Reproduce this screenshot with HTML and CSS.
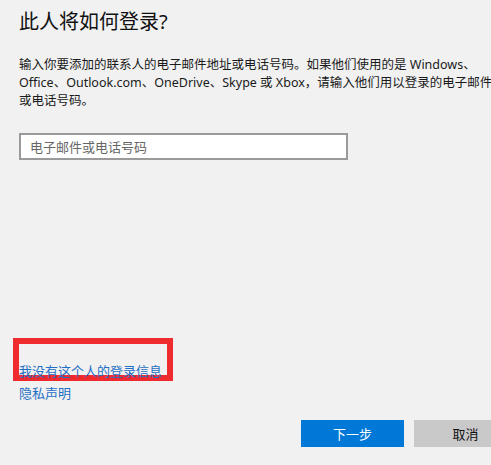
FILE: index.html
```html
<!DOCTYPE html>
<html lang="zh-CN">
<head>
<meta charset="UTF-8">
<meta name="viewport" content="width=device-width, initial-scale=1.0">
<title>此人将如何登录?</title>
<link rel="stylesheet" href="styles.css">
</head>
<body>

<div class="page">
<h1>此人将如何登录?</h1>

<p class="intro">
输入你要添加的联系人的电子邮件地址或电话号码。如果他们使用的是 Windows、<br>
Office、Outlook.com、OneDrive、Skype 或 Xbox，请输入他们用以登录的电子邮件地址<br>
或电话号码。
</p>

<input class="account" type="text" placeholder="电子邮件或电话号码">

<div class="links">
<div class="highlight">
<span class="callout"></span>
<a href="#">我没有这个人的登录信息</a>
</div>
<a href="#">隐私声明</a>
</div>

<div class="actions">
<button class="btn-next">下一步</button>
<button class="btn-cancel">取消</button>
</div>
</div>

</body>
</html>
```

FILE: styles.css
```css
*{box-sizing:border-box;}

html,body{
    margin:0;
    height:100%;
    overflow:hidden;
}

body{
    font-family:"Noto Sans","Noto Sans CJK SC",sans-serif;
    background:#f1f1f1;
    color:#1a1a1a;
}

.page{
    display:flex;
    flex-direction:column;
    align-items:flex-start;
    padding-left:19px;
}

h1{
    font-size:20px;
    font-weight:normal;
    line-height:28px;
    margin:8px 0 0;
    color:#111;
}

.intro{
    font-size:12.5px;
    line-height:18px;
    margin:20px 0 0;
    white-space:nowrap;
}

/* Input */
input.account{
    margin-top:23px;
    width:329px;
    height:27px;
    border:2px solid #9a9a9a;
    background:#fff;
    padding:0 9px;
    font-family:inherit;
    font-size:13px;
    outline:none;
}
input.account::placeholder{color:#666;}

/* Links */
.links{
    margin-top:199px;
    display:flex;
    flex-direction:column;
    gap:3px;
}

.links a{
    color:#1f6fc5;
    text-decoration:none;
    font-size:13px;
    line-height:18px;
    position:relative;
    z-index:1;
}

.highlight{
    position:relative;
}

.callout{
    position:absolute;
    left:-6px;
    top:-21px;
    width:160px;
    height:43px;
    border:6px solid #ef2b30;
}

/* Buttons */
.actions{
    display:flex;
    gap:10px;
    margin-top:18px;
    margin-left:282px;
}

button{
    width:103px;
    height:27px;
    flex:none;
    border:none;
    font-family:inherit;
    font-size:13px;
    cursor:pointer;
}

.btn-next{background:#0078d7;color:#fff;}
.btn-cancel{background:#c9c9c9;color:#111;}
```
